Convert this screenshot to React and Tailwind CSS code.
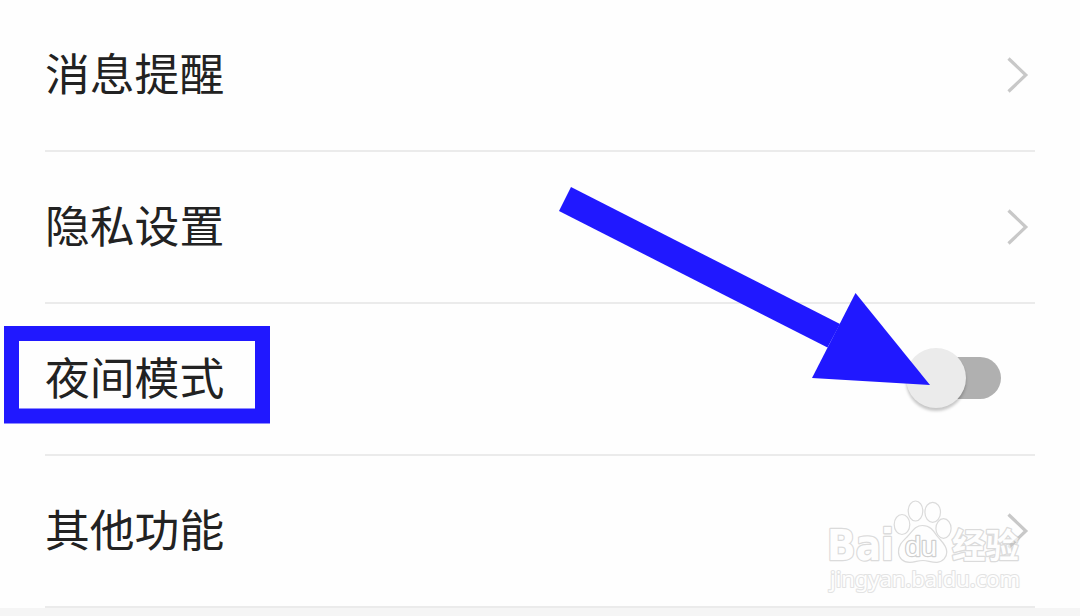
import React, { useState } from 'react';

const BLUE = '#2018ff';

const Chevron = () => (
  <svg width="24" height="40" viewBox="0 0 24 40" fill="none" className="mr-[6px]">
    <path d="M3.5 3.5 L20.8 20 L3.5 36.5" stroke="#c8c8c8" strokeWidth="3.2" />
  </svg>
);

const Toggle = ({ checked, onChange }) => (
  <button
    type="button"
    role="switch"
    aria-checked={checked}
    onClick={() => onChange(!checked)}
    className="relative mr-[34px] mb-[2px] h-[42px] w-[88px] rounded-full bg-[#b0b0b0]"
  >
    <span
      className={`absolute -top-[9px] size-[60px] rounded-full bg-[#ebebeb] shadow-[0_3px_3px_rgba(0,0,0,0.22)] ${
        checked ? 'right-0' : '-left-[7px]'
      }`}
    />
  </button>
);

const SettingRow = ({ label, children }) => (
  <li className="flex h-[152px] items-center justify-between border-b-2 border-[#ebebeb]">
    <span className="mb-[5px] text-[44.8px] leading-none text-[#222222]">{label}</span>
    {children}
  </li>
);

// Blue frame around the night mode label plus the arrow to its switch
const Annotations = () => (
  <svg width="1080" height="616" className="pointer-events-none absolute left-0 top-0">
    <rect x="11.5" y="333.5" width="251" height="82.5" fill="none" stroke={BLUE} strokeWidth="15" />
    <path d="M571 187 L840 324 L827.5 347.5 L559 211 Z" fill={BLUE} />
    <path d="M855.5 293 L930 385 L812 378 Z" fill={BLUE} />
  </svg>
);

const Watermark = () => (
  <svg
    width="210"
    height="100"
    viewBox="820 495 210 100"
    fill="#ffffff"
    stroke="#c4c4c4"
    strokeWidth="1.2"
    strokeLinejoin="round"
    className="pointer-events-none absolute left-[820px] top-[495px] opacity-60"
  >
    <text x="827" y="560" fontFamily="'DejaVu Sans', sans-serif" fontWeight="bold" fontSize="42" strokeWidth="2.6" paintOrder="stroke" textLength="67" lengthAdjust="spacingAndGlyphs">Bai</text>
    <ellipse cx="902" cy="524.5" rx="7.8" ry="10" />
    <ellipse cx="915.5" cy="511" rx="7.3" ry="10" />
    <ellipse cx="932.7" cy="512.3" rx="7.8" ry="10" />
    <ellipse cx="943.5" cy="528.5" rx="7.6" ry="9.8" />
    <path d="M922.5 525.5 C915 525.5 912 532 907 537 C902 542 898.5 545 898.5 552 C898.5 558 903 562.5 910 562.3 C915 562.2 918 560.5 923 560.5 C928 560.5 931 562.5 937 562.3 C943 562 946.8 557 946.8 552 C946.8 545 941 541 937 536 C933 530 930 525.5 922.5 525.5 Z" />
    <text x="905" y="556" fontFamily="'Liberation Sans', sans-serif" fontSize="27" strokeWidth="2.4" stroke="#b0b0b0" paintOrder="stroke" textLength="32" lengthAdjust="spacingAndGlyphs">du</text>
    <text x="952" y="557.5" fontFamily="'Noto Sans CJK SC', sans-serif" fontWeight="bold" fontSize="34" strokeWidth="2.6" paintOrder="stroke" textLength="67" lengthAdjust="spacingAndGlyphs">经验</text>
    <text x="830" y="586.5" fontFamily="'Noto Sans', sans-serif" fontSize="22" strokeWidth="2.2" paintOrder="stroke" stroke="#d2d2d2" textLength="190">jingyan.baidu.com</text>
  </svg>
);

const App = () => {
  const [nightMode, setNightMode] = useState(false);

  return (
    <div className="relative h-[616px] w-[1080px] overflow-hidden bg-[#fefefe] font-['Noto_Sans_CJK_SC',sans-serif]">
      <ul className="ml-[45px] w-[990px]">
        <SettingRow label="消息提醒">
          <Chevron />
        </SettingRow>
        <SettingRow label="隐私设置">
          <Chevron />
        </SettingRow>
        <SettingRow label="夜间模式">
          <Toggle checked={nightMode} onChange={setNightMode} />
        </SettingRow>
        <SettingRow label="其他功能">
          <Chevron />
        </SettingRow>
      </ul>
      <div className="h-2 bg-[#f5f5f5]" />
      <Annotations />
      <Watermark />
    </div>
  );
};

export default App;
